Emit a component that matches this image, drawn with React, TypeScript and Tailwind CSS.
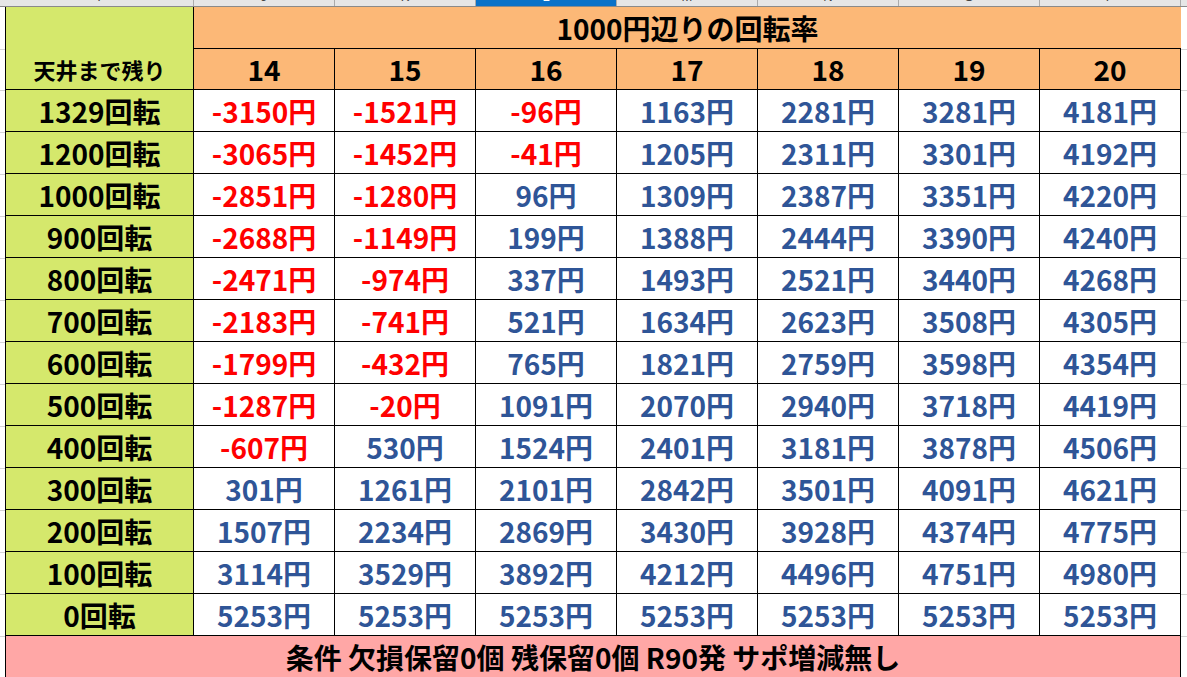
const FONT = { fontFamily: '"Noto Sans CJK JP", "Noto Sans", sans-serif' };

const COLS = [14, 15, 16, 17, 18, 19, 20];
const LETTERS = ["I", "J", "K", "L", "M", "N", "O", "P"];

const ROWS: [string, number[]][] = [
  ["1329回転", [-3150, -1521, -96, 1163, 2281, 3281, 4181]],
  ["1200回転", [-3065, -1452, -41, 1205, 2311, 3301, 4192]],
  ["1000回転", [-2851, -1280, 96, 1309, 2387, 3351, 4220]],
  ["900回転", [-2688, -1149, 199, 1388, 2444, 3390, 4240]],
  ["800回転", [-2471, -974, 337, 1493, 2521, 3440, 4268]],
  ["700回転", [-2183, -741, 521, 1634, 2623, 3508, 4305]],
  ["600回転", [-1799, -432, 765, 1821, 2759, 3598, 4354]],
  ["500回転", [-1287, -20, 1091, 2070, 2940, 3718, 4419]],
  ["400回転", [-607, 530, 1524, 2401, 3181, 3878, 4506]],
  ["300回転", [301, 1261, 2101, 2842, 3501, 4091, 4621]],
  ["200回転", [1507, 2234, 2869, 3430, 3928, 4374, 4775]],
  ["100回転", [3114, 3529, 3892, 4212, 4496, 4751, 4980]],
  ["0回転", [5253, 5253, 5253, 5253, 5253, 5253, 5253]],
];

// heights of the sheet rows, used by the gray gutters on both sides
const ROW_H = [43, 41, ...ROWS.map(() => 42), 42];

function Gutter({ w }: { w: string }) {
  return (
    <div className={`flex flex-col ${w}`}>
      {ROW_H.map((h, i) => (
        <div key={i} className="border-b border-[#d4d4d4]" style={{ height: h }} />
      ))}
    </div>
  );
}

function ColumnStrip() {
  return (
    <div className="flex h-[7px] bg-[#e6e6e6] border-b border-[#8a8a8a] overflow-hidden">
      <div className="w-[5px]" />
      {LETTERS.map((l, i) => (
        <div
          key={l}
          className={`flex justify-center border-r border-[#ababab] overflow-hidden ${
            i === 0 ? "w-[189px]" : "w-[141px]"
          } ${i === 3 ? "bg-[#0a72c9] text-white" : "text-[#444]"}`}
        >
          <span className="text-[13px] leading-[13px] -mt-[10px]" style={{ fontFamily: '"Liberation Sans", sans-serif' }}>
            {l}
          </span>
        </div>
      ))}
      <div className="flex-1" />
    </div>
  );
}

export default function App() {
  return (
    <div className="w-[1187px] h-[677px] overflow-hidden bg-white" style={FONT}>
      <ColumnStrip />
      <div className="flex">
        <Gutter w="w-[5px]" />
        <div className="w-[1176px] border-l border-r border-black">
          <div className="grid grid-cols-[188px_repeat(7,141px)] grid-rows-[42px_41px] font-bold text-black">
            <div className="row-span-2 bg-[#d5e86c] border-r border-b border-black flex flex-col justify-end">
              <div className="h-[40px] flex items-center justify-center text-[22px]">天井まで残り</div>
            </div>
            <div className="col-span-7 bg-[#fcb877] border-b border-black flex items-center justify-center text-[28px] leading-none">
              1000円辺りの回転率
            </div>
            {COLS.map((c) => (
              <div
                key={c}
                className="bg-[#fcb877] border-r border-b border-black flex items-center justify-center text-[28px] leading-none"
              >
                {c}
              </div>
            ))}
          </div>

          {ROWS.map(([label, vals]) => (
            <div key={label} className="grid grid-cols-[188px_repeat(7,141px)] h-[42px] font-bold text-[28px] leading-none">
              <div className="bg-[#d5e86c] border-r border-b border-black flex items-center justify-center text-black">
                {label}
              </div>
              {vals.map((v, i) => (
                <div
                  key={i}
                  className={`border-r border-b border-black flex items-center justify-center ${
                    v < 0 ? "text-[#ff0000]" : "text-[#2f5597]"
                  }`}
                >
                  {v}円
                </div>
              ))}
            </div>
          ))}

          <div className="h-[42px] bg-[#ffa7a6] flex items-center justify-center font-bold text-[28px] leading-none text-black">
            条件 欠損保留0個 残保留0個 R90発 サポ増減無し
          </div>
        </div>
        <Gutter w="flex-1" />
      </div>
    </div>
  );
}
